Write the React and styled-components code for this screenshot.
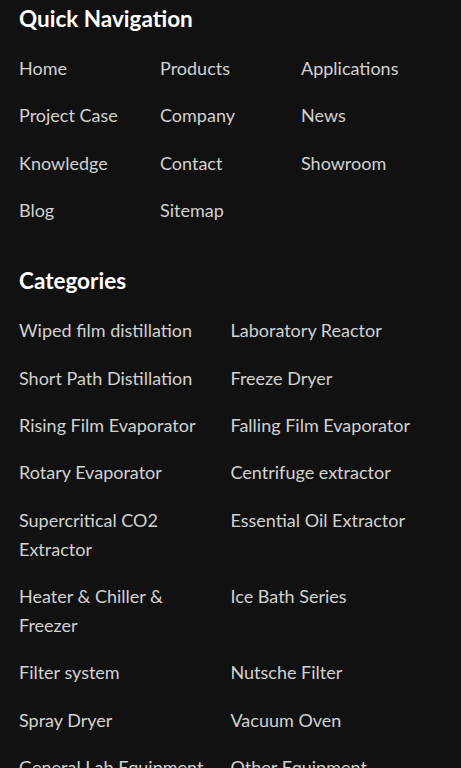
import React from "react";
import styled, { createGlobalStyle } from "styled-components";

const Global = createGlobalStyle`
  html, body {
    margin: 0;
    padding: 0;
    background: #111111;
  }
  body {
    font-family: Lato, "Noto Sans", sans-serif;
    -webkit-font-smoothing: antialiased;
  }
`;

const Footer = styled.footer`
  background: #111111;
  padding: 4px 19px 0;
  min-height: 768px;
  box-sizing: border-box;
`;

const Section = styled.section`
  & + & {
    margin-top: 41.5px;
  }
`;

const Heading = styled.h3`
  margin: 0 0 20px;
  font-size: 22.5px;
  line-height: 30px;
  font-weight: 700;
  color: #ffffff;
`;

const LinkGrid = styled.ul`
  list-style: none;
  margin: 0;
  padding: 0;
  display: grid;
  grid-template-columns: repeat(${(p) => p.$cols}, 1fr);
  row-gap: ${(p) => p.$gap}px;
`;

const Item = styled.li`
  padding-right: 10px;
`;

const Link = styled.a`
  font-size: 18px;
  line-height: 28.8px;
  color: #d2d2d2;
  text-decoration: none;
`;

const quick = [
  "Home", "Products", "Applications",
  "Project Case", "Company", "News",
  "Knowledge", "Contact", "Showroom",
  "Blog", "Sitemap",
];

const cats = [
  "Wiped film distillation", "Laboratory Reactor",
  "Short Path Distillation", "Freeze Dryer",
  "Rising Film Evaporator", "Falling Film Evaporator",
  "Rotary Evaporator", "Centrifuge extractor",
  "Supercritical CO2 Extractor", "Essential Oil Extractor",
  "Heater & Chiller & Freezer", "Ice Bath Series",
  "Filter system", "Nutsche Filter",
  "Spray Dryer", "Vacuum Oven",
  "General Lab Equipment", "Other Equipment",
];

export default function App() {
  return (
    <>
      <Global />
      <Footer>
        <Section>
          <Heading>Quick Navigation</Heading>
          <LinkGrid $cols={3} $gap={18.5}>
            {quick.map((t) => (
              <Item key={t}>
                <Link href="#">{t}</Link>
              </Item>
            ))}
          </LinkGrid>
        </Section>
        <Section>
          <Heading>Categories</Heading>
          <LinkGrid $cols={2} $gap={18.6}>
            {cats.map((t) => (
              <Item key={t}>
                <Link href="#">{t}</Link>
              </Item>
            ))}
          </LinkGrid>
        </Section>
      </Footer>
    </>
  );
}
